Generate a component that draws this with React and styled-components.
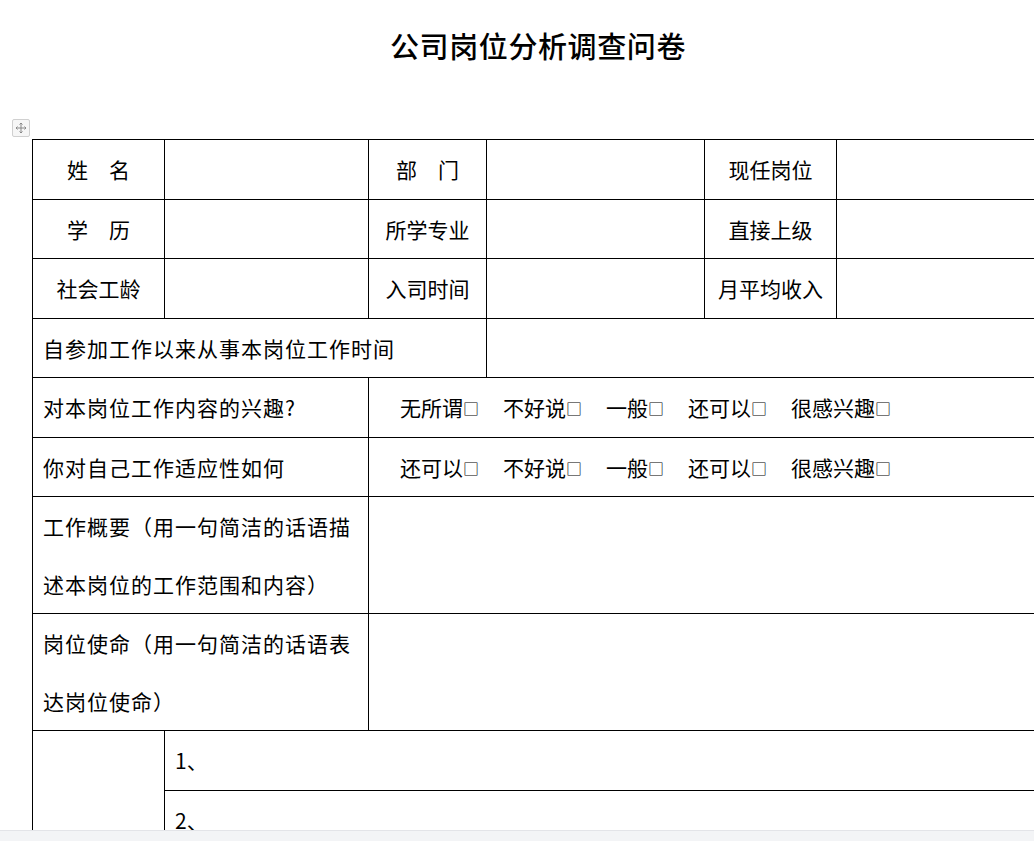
import React from "react";
import styled, { createGlobalStyle } from "styled-components";

const G = createGlobalStyle`
  html,body{margin:0;padding:0;background:#fff;overflow:hidden;height:841px;}
  body{font-family:"Noto Sans CJK SC","Noto Sans",sans-serif;color:#000;}
`;
const Page = styled.div`position:relative;height:841px;overflow:hidden;`;
const Title = styled.h1`
  margin:0;padding-top:24px;height:115px;box-sizing:border-box;text-align:center;
  font-size:29px;font-weight:500;line-height:42px;padding-left:42px;letter-spacing:0.6px;
`;
const Move = styled.div`
  position:absolute;left:12px;top:119px;width:18px;height:18px;box-sizing:border-box;
  border:1px solid #d0d0d0;border-radius:2px;background:#f6f6f6;display:flex;align-items:center;justify-content:center;
`;
const Wrap = styled.div`padding-left:32px;padding-top:24px;`;
const Table = styled.table`
  border-collapse:collapse;table-layout:fixed;width:1100px;font-size:21px;
  td{border:1.5px solid #000;padding:0;height:58.5px;}
`;
const C = styled.td`
  text-align:${p=>p.left?"left":"center"};
  padding-left:${p=>p.left?"10px":"0"} !important;
  vertical-align:middle;letter-spacing:${p=>p.wide?"1px":"0"};
  line-height:${p=>p.ml?"58px":"normal"};
`;
const Opts = styled.td`padding-left:31px !important;white-space:nowrap;`;
const Opt = styled.span`margin-right:24px;`;
const Box = styled.span`font-size:16px;position:relative;top:-1px;`;
const Bottom = styled.div`position:absolute;left:0;right:0;top:830px;height:11px;background:#f3f4f6;border-top:1px solid #e3e4e8;`;

const opts = (list) => list.map((o,i)=><Opt key={i}>{o}<Box>□</Box></Opt>);

export default function App(){
  return <Page><G/>
    <Title>公司岗位分析调查问卷</Title>
    <Move><svg width="12" height="12" viewBox="0 0 12 12" fill="none" stroke="#888" strokeWidth="1"><path d="M6 1v10M1 6h10M4.5 2.5L6 1l1.5 1.5M4.5 9.5L6 11l1.5-1.5M2.5 4.5L1 6l1.5 1.5M9.5 4.5L11 6l-1.5 1.5"/></svg></Move>
    <Wrap>
      <Table>
        <colgroup><col style={{width:132}}/><col style={{width:204}}/><col style={{width:118}}/><col style={{width:218}}/><col style={{width:132}}/><col style={{width:296}}/></colgroup>
        <tbody>
          <tr><C>姓　名</C><C/><C>部　门</C><C/><C>现任岗位</C><C/></tr>
          <tr><C>学　历</C><C/><C>所学专业</C><C/><C>直接上级</C><C/></tr>
          <tr><C>社会工龄</C><C/><C>入司时间</C><C/><C>月平均收入</C><C/></tr>
          <tr><C left colSpan={3} wide>自参加工作以来从事本岗位工作时间</C><C colSpan={3}/></tr>
          <tr><C left colSpan={2} wide>对本岗位工作内容的兴趣?</C><Opts colSpan={4}>{opts(["无所谓","不好说","一般","还可以","很感兴趣"])}</Opts></tr>
          <tr><C left colSpan={2} wide>你对自己工作适应性如何</C><Opts colSpan={4}>{opts(["还可以","不好说","一般","还可以","很感兴趣"])}</Opts></tr>
          <tr><C left ml wide colSpan={2}>工作概要（用一句简洁的话语描<br/>述本岗位的工作范围和内容）</C><C colSpan={4}/></tr>
          <tr><C left ml wide colSpan={2}>岗位使命（用一句简洁的话语表<br/>达岗位使命）</C><C colSpan={4}/></tr>
          <tr><C rowSpan={2}/><C left colSpan={5}>1、</C></tr>
          <tr><C left colSpan={5}>2、</C></tr>
        </tbody>
      </Table>
    </Wrap>
    <Bottom/>
  </Page>;
}
